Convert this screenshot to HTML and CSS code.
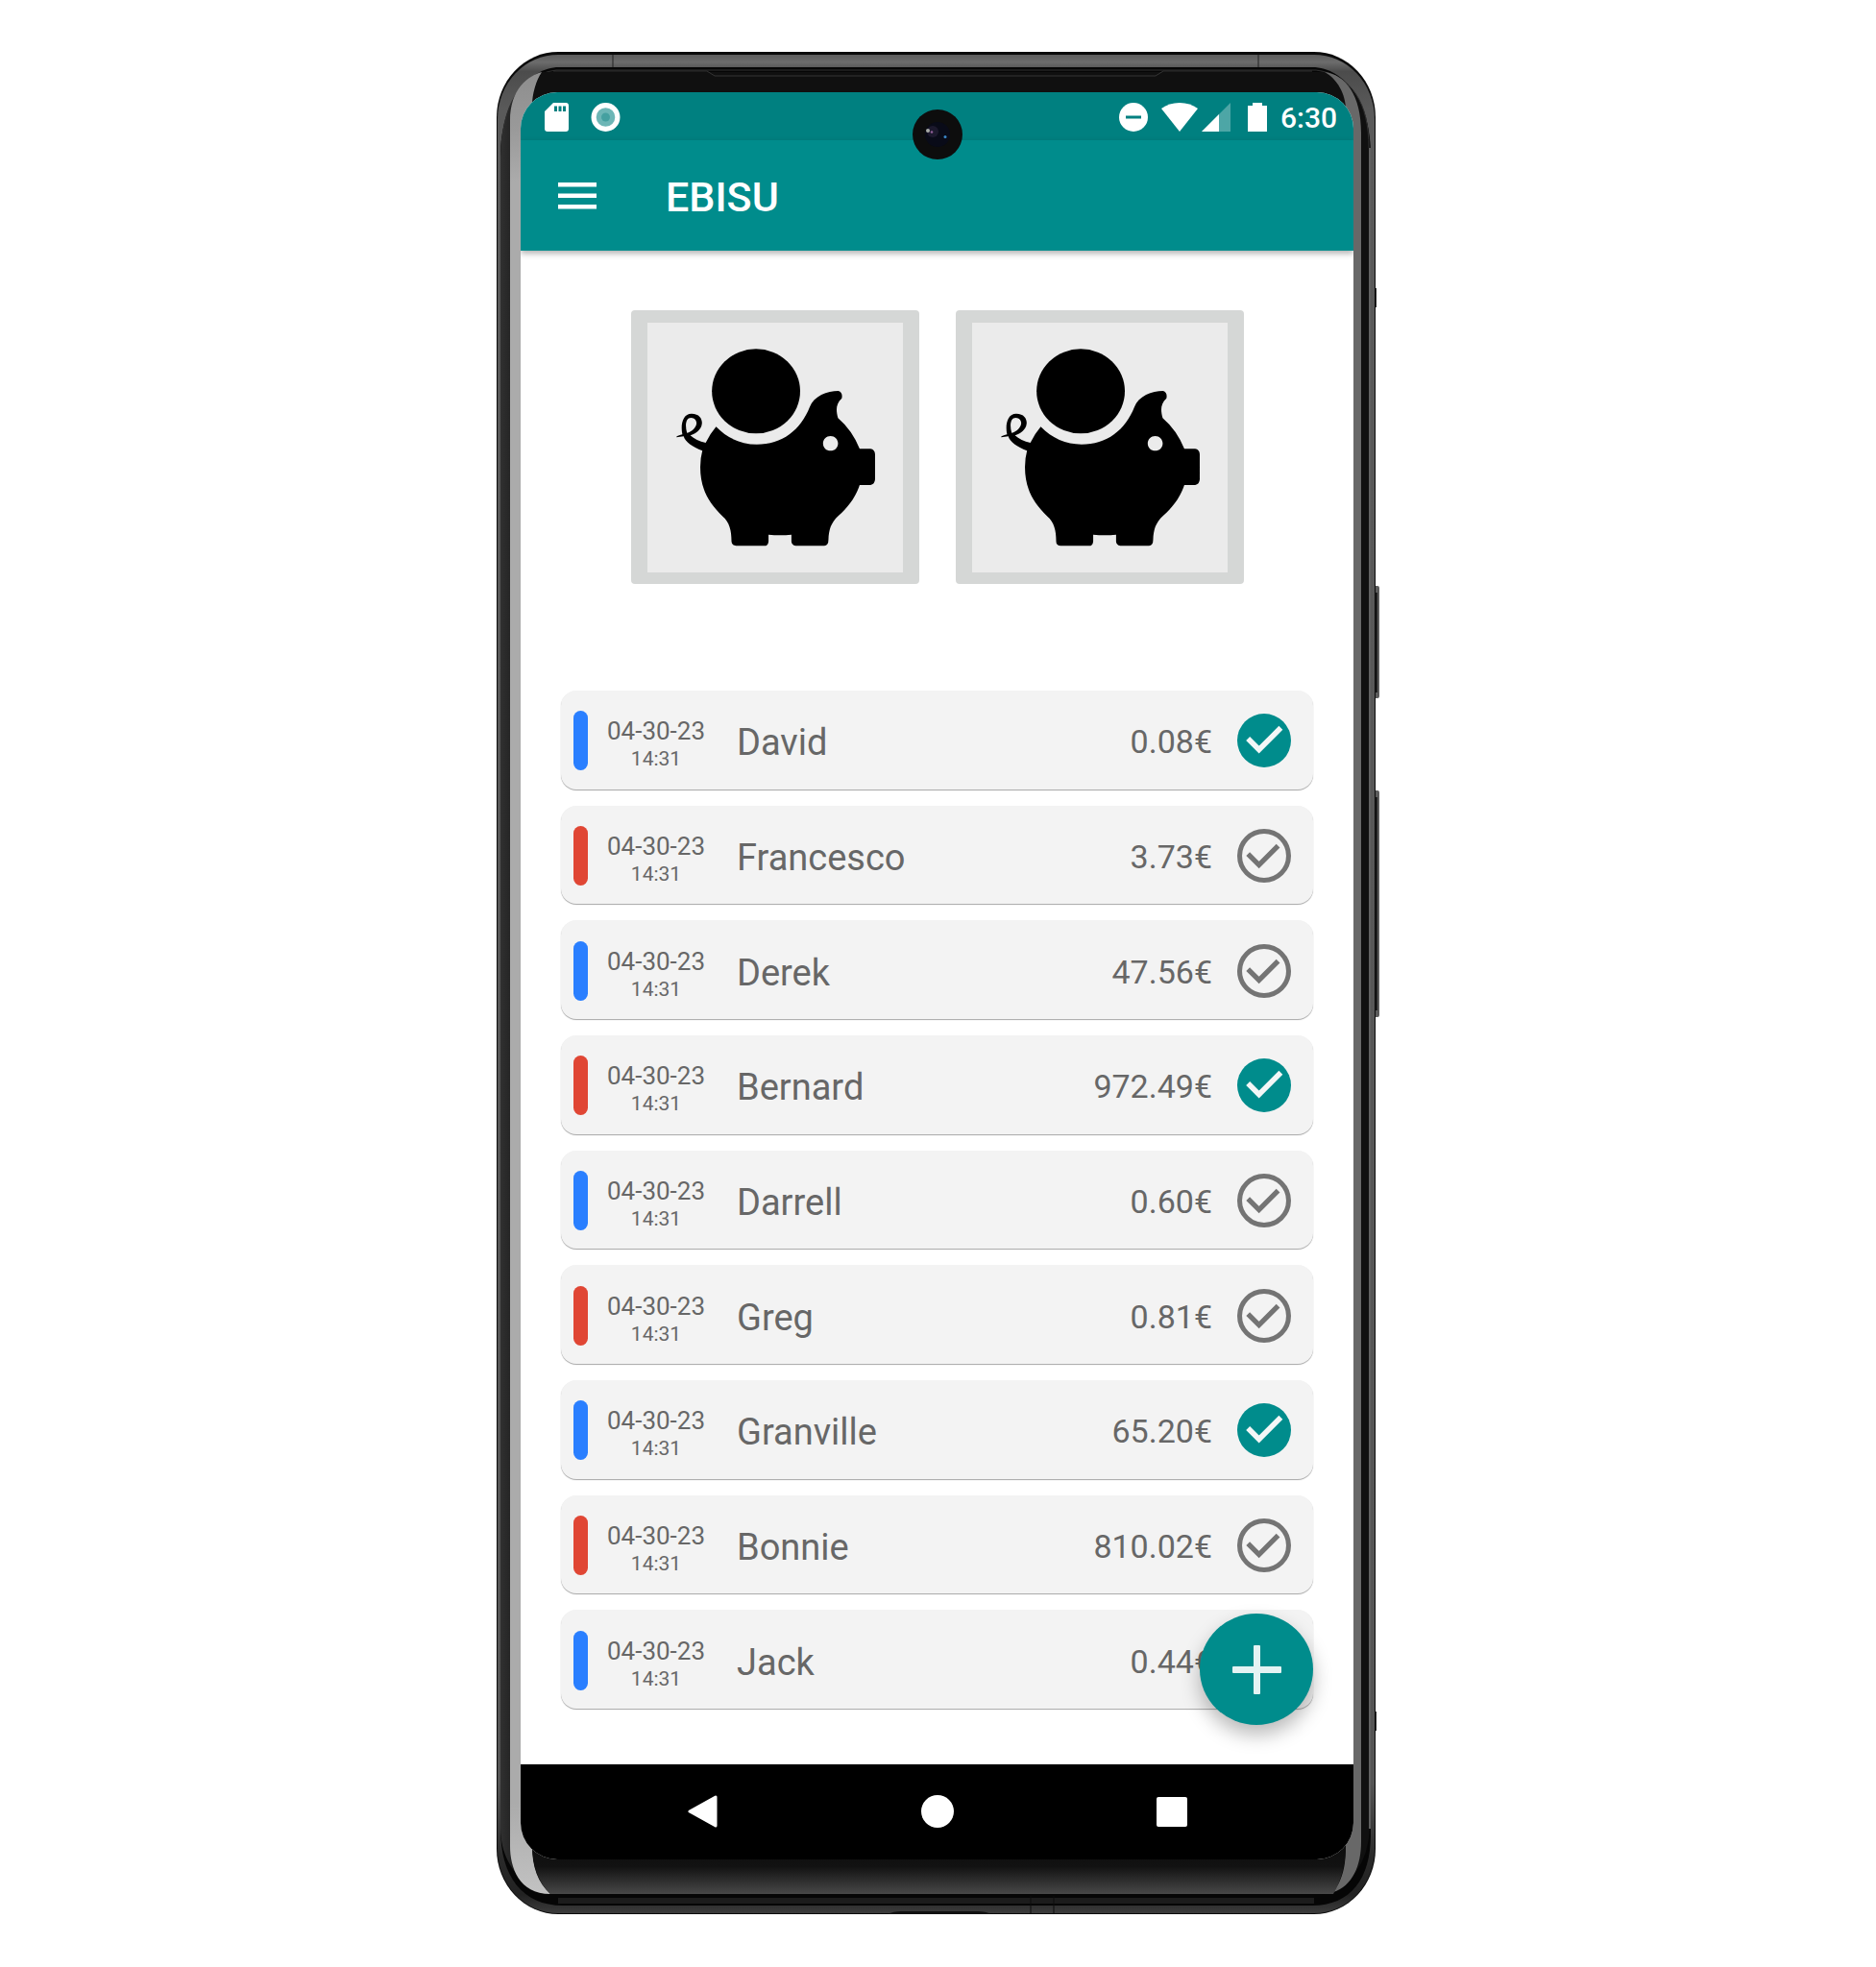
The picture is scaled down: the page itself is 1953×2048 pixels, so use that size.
FILE: index.html
```html
<!DOCTYPE html>
<html lang="en">
<head>
<meta charset="utf-8">
<meta name="viewport" content="width=device-width, initial-scale=1">
<title>EBISU</title>
<link rel="stylesheet" href="styles.css">
</head>
<body>
<svg class="sprites" aria-hidden="true">
  <defs>
    <symbol id="tick-on" viewBox="2 2 20 20"><circle cx="12" cy="12" r="10" fill="#008c8c"/><path d="M6 11.3l4.1 4.1 8.1-8.1" fill="none" stroke="#f3f7f7" stroke-width="2"/></symbol>
    <symbol id="tick-off" viewBox="2 2 20 20"><circle cx="12" cy="12" r="9.1" fill="none" stroke="#747474" stroke-width="1.8"/><path d="M6 11.3l4.1 4.1 7.1-7.1" fill="none" stroke="#747474" stroke-width="1.9"/></symbol>
    <symbol id="pig" viewBox="78 107 614 780" preserveAspectRatio="none">
      <ellipse cx="339" cy="321" rx="106" ry="132"/>
      <path fill-rule="evenodd" d="M243 432C270 468 303 487 341 487C402 487 446 442 468 370C478 336 510 320 537 320Q548 325 545 343C530 361 531 382 536 405Q570 443 588 501H614Q624 503 625 517V597Q624 612 614 614H588C578 653 560 684 537 710C518 733 514 755 513 785Q513 803 503 804H434Q424 800 424 790V769Q397 773 369 769V790Q368 804 359 804H291Q280 803 280 790C280 755 275 730 259 712C225 670 205 625 205 558Q205 530 210 507C186 495 169 480 165 462L148 465Q146 461 162 456C157 425 163 391 184 391C204 391 210 409 209 422C208 440 195 454 181 459C190 470 203 479 218 482Q228 455 243 432ZM173 451C185 447 195 435 196 421C196 411 191 405 183 404C170 404 168 427 173 451ZM518 461C508 461 500 471 500 484C500 497 508 507 518 507C528 507 536 497 536 484C536 471 528 461 518 461Z"/>
    </symbol>
  </defs>
</svg>

<div class="phone">
  <svg class="phone-frame" viewBox="0 0 921 1939" preserveAspectRatio="none" aria-hidden="true">
    <defs>
      <linearGradient id="rim" x1="0" y1="0" x2="0" y2="1">
        <stop offset="0" stop-color="#5c5c5c"/><stop offset=".004" stop-color="#6c6c6c"/><stop offset=".009" stop-color="#4c4c4c"/><stop offset=".03" stop-color="#5a5a5a"/><stop offset=".93" stop-color="#555"/><stop offset=".97" stop-color="#2a2a2a"/><stop offset=".99" stop-color="#222"/><stop offset="1" stop-color="#3c3c3c"/>
      </linearGradient>
      <linearGradient id="chin" x1="0" y1="0" x2="0" y2="1">
        <stop offset="0" stop-color="#0d0d0d"/><stop offset=".45" stop-color="#121212"/><stop offset="1" stop-color="#484848"/>
      </linearGradient>
      <linearGradient id="wall-left"><stop offset="0" stop-color="#303030"/><stop offset=".35" stop-color="#1c1c1c"/><stop offset="1" stop-color="#050505"/></linearGradient>
      <linearGradient id="glass-left" x1="0" y1="0" x2="0" y2="1"><stop offset="0" stop-color="#8e8e8e"/><stop offset=".03" stop-color="#999"/><stop offset=".06" stop-color="#ababab"/><stop offset=".95" stop-color="#ababab"/><stop offset="1" stop-color="#c2c2c2"/></linearGradient>
    </defs>
    <path fill="#242424" d="M914 246h3v20h-3zM914 1728h3v20h-3z"/>
    <rect x="914" y="556" width="6" height="117" rx="2" fill="#5c5c5c"/><path fill="#1c1c1c" d="M915 563h3v104h-3z"/>
    <rect x="914" y="769" width="6" height="236" rx="2" fill="#5c5c5c"/><path fill="#1c1c1c" d="M915 776h3v222h-3z"/>
    <rect x="1" width="915" height="1939" rx="64" ry="68" fill="#0b0b0b"/>
    <rect x="2" y="3" width="913" height="1935" rx="63" ry="67" fill="url(#rim)"/>
    <path d="M66 16H850C884 16 911 54 911 108V1856C911 1902 890 1930 850 1930H70C28 1930 5 1900 5 1850V108C5 54 34 16 66 16Z" fill="#060606"/>
    <path d="M65 1925H852" stroke="#1c1c1c" stroke-width="6"/>
    <path d="M5 110Q6 30 60 19Q17 36 15 90V1860Q17 1906 56 1920Q6 1900 5 1850Z" fill="url(#wall-left)"/>
    <path d="M901 100V1868Q898 1906 860 1919Q907 1904 910 1850V100Q909 30 855 18Q900 40 901 100Z" fill="#101010"/>
    <path d="M910 100V1850" stroke="#606060" stroke-width="2"/>
    <path d="M7 100C7 58 24 24 63 19H854C892 24 909 54 909 100" fill="none" stroke="#303030"/>
    <path d="M48 21H863Q884 32 885 60H38Q38 38 48 21Z" fill="#101010"/>
    <path d="M48 21C34 25 15 38 15 72V1868C15 1890 24 1918 57 1918C44 1906 38 1890 38 1868V56C38 44 42 30 48 21Z" fill="url(#glass-left)"/>
    <path d="M863 21C885 24 901 45 901 84V1864C901 1888 892 1910 872 1916C882 1902 885 1890 885 1866V60C885 44 876 28 863 21Z" fill="#686868"/>
    <path d="M38 1866H885Q885 1896 872 1918H57Q38 1900 38 1866Z" fill="url(#chin)"/>
    <path d="M60 20H220l8 5H687l8-5H850" fill="none" stroke="#353535"/>
    <path d="M122 3V16M794 3V16" stroke="#222" stroke-width="1"/>
    <path d="M557 1920V1938M581 1920V1938" stroke="#0c0c0c"/>
    <path d="M408 1939q6-3 14-3h80q8 0 14 3z" fill="#111"/>
  </svg>

  <div class="screen">
    <div class="status-bar">
      <svg width="25" height="30" viewBox="0 0 25 30" fill="#fff" aria-hidden="true"><path fill-rule="evenodd" d="M9 0H22Q25 0 25 3V27Q25 30 22 30H3Q0 30 0 27V9ZM10 3.500v5.500h3v-5.500zM14.500 3.500v5.500h3v-5.500zM19 3.500v5.500h3v-5.500z"/></svg>
      <svg class="status-record" width="31" height="30" viewBox="0 0 31 30" aria-hidden="true"><circle cx="15.500" cy="15" r="15" fill="#fff"/><circle cx="15.500" cy="15" r="9.800" fill="#6db6b6"/><circle cx="15.500" cy="15" r="4.500" fill="#45a0a0"/></svg>
      <svg class="status-right" width="30" height="30" viewBox="0 0 30 30" aria-hidden="true"><circle cx="15" cy="15" r="15" fill="#fff"/><path fill="#008080" d="M7 13.500h16v3H7z"/></svg>
      <svg class="status-wifi" width="38" height="30" viewBox="0 0 38 30" fill="#fff" aria-hidden="true"><path d="M19 30L0 6Q8 0 19 0T38 6Z"/></svg>
      <svg class="status-signal" width="30" height="30" viewBox="0 0 30 30" aria-hidden="true"><path d="M30 0V30H0Z" fill="#4da6a6"/><path d="M18 12V30H0Z" fill="#fff"/></svg>
      <svg class="status-battery" width="20" height="30" viewBox="0 0 20 30" fill="#fff" aria-hidden="true"><path d="M0 3H5V0H15V3H20V30H0Z"/></svg>
      <time class="clock">6:30</time>
    </div>
    <svg class="camera" viewBox="0 0 52 52" aria-hidden="true">
      <circle cx="26" cy="26" r="26" fill="#0d0d0d"/><circle cx="26" cy="26" r="13" fill="#090b18"/><circle cx="21" cy="23" r="6" fill="#252036" opacity=".7"/>
      <circle cx="16" cy="22" r="2" fill="#a8aca8"/><circle cx="20" cy="23.500" r="1.300" fill="#906098"/><circle cx="34" cy="28.500" r="1.500" fill="#3a86c8"/>
    </svg>
    <header class="app-bar">
      <button class="menu-button" type="button" aria-label="Open menu"><svg width="40" height="28" viewBox="0 0 40 28" fill="#fff" aria-hidden="true"><path d="M0 0h40v4.500H0zM0 11.500h40v4.500H0zM0 23h40v4.500H0z"/></svg></button>
      <h1 class="app-title">EBISU</h1>
    </header>

    <main class="content">
      <div class="banks">
        <button class="bank" type="button" aria-label="First piggy bank"><svg class="bank-pig" aria-hidden="true"><use href="#pig"/></svg></button>
        <button class="bank" type="button" aria-label="Second piggy bank"><svg class="bank-pig" aria-hidden="true"><use href="#pig"/></svg></button>
      </div>

      <ul class="entries">
        <li class="entry"><span class="mark mark-blue"></span><time class="when"><span class="date">04-30-23</span><span class="hour">14:31</span></time><span class="name">David</span><span class="amount">0.08€</span><label class="settled"><input type="checkbox" aria-label="David settled" checked><svg class="on"><use href="#tick-on"/></svg><svg class="off"><use href="#tick-off"/></svg></label></li>
        <li class="entry"><span class="mark mark-red"></span><time class="when"><span class="date">04-30-23</span><span class="hour">14:31</span></time><span class="name">Francesco</span><span class="amount">3.73€</span><label class="settled"><input type="checkbox" aria-label="Francesco settled"><svg class="on"><use href="#tick-on"/></svg><svg class="off"><use href="#tick-off"/></svg></label></li>
        <li class="entry"><span class="mark mark-blue"></span><time class="when"><span class="date">04-30-23</span><span class="hour">14:31</span></time><span class="name">Derek</span><span class="amount">47.56€</span><label class="settled"><input type="checkbox" aria-label="Derek settled"><svg class="on"><use href="#tick-on"/></svg><svg class="off"><use href="#tick-off"/></svg></label></li>
        <li class="entry"><span class="mark mark-red"></span><time class="when"><span class="date">04-30-23</span><span class="hour">14:31</span></time><span class="name">Bernard</span><span class="amount">972.49€</span><label class="settled"><input type="checkbox" aria-label="Bernard settled" checked><svg class="on"><use href="#tick-on"/></svg><svg class="off"><use href="#tick-off"/></svg></label></li>
        <li class="entry"><span class="mark mark-blue"></span><time class="when"><span class="date">04-30-23</span><span class="hour">14:31</span></time><span class="name">Darrell</span><span class="amount">0.60€</span><label class="settled"><input type="checkbox" aria-label="Darrell settled"><svg class="on"><use href="#tick-on"/></svg><svg class="off"><use href="#tick-off"/></svg></label></li>
        <li class="entry"><span class="mark mark-red"></span><time class="when"><span class="date">04-30-23</span><span class="hour">14:31</span></time><span class="name">Greg</span><span class="amount">0.81€</span><label class="settled"><input type="checkbox" aria-label="Greg settled"><svg class="on"><use href="#tick-on"/></svg><svg class="off"><use href="#tick-off"/></svg></label></li>
        <li class="entry"><span class="mark mark-blue"></span><time class="when"><span class="date">04-30-23</span><span class="hour">14:31</span></time><span class="name">Granville</span><span class="amount">65.20€</span><label class="settled"><input type="checkbox" aria-label="Granville settled" checked><svg class="on"><use href="#tick-on"/></svg><svg class="off"><use href="#tick-off"/></svg></label></li>
        <li class="entry"><span class="mark mark-red"></span><time class="when"><span class="date">04-30-23</span><span class="hour">14:31</span></time><span class="name">Bonnie</span><span class="amount">810.02€</span><label class="settled"><input type="checkbox" aria-label="Bonnie settled"><svg class="on"><use href="#tick-on"/></svg><svg class="off"><use href="#tick-off"/></svg></label></li>
        <li class="entry"><span class="mark mark-blue"></span><time class="when"><span class="date">04-30-23</span><span class="hour">14:31</span></time><span class="name">Jack</span><span class="amount">0.44€</span><label class="settled"><input type="checkbox" aria-label="Jack settled"><svg class="on"><use href="#tick-on"/></svg><svg class="off"><use href="#tick-off"/></svg></label></li>
      </ul>
      <button class="add-button" type="button" aria-label="Add entry"><svg width="51" height="51" viewBox="0 0 51 51" fill="#e4f3f3" aria-hidden="true"><rect y="22" width="51" height="7" rx="1"/><rect x="22" width="7" height="51" rx="1"/></svg></button>
    </main>

    <nav class="system-nav" aria-label="System">
      <button type="button" aria-label="Back"><svg width="34" height="34" viewBox="0 0 34 34" aria-hidden="true"><path d="M3 17L30 2V32Z" fill="#fff" stroke="#fff" stroke-width="3" stroke-linejoin="round"/></svg></button>
      <button type="button" aria-label="Home"><svg width="34" height="34" viewBox="0 0 34 34" fill="#fff" aria-hidden="true"><circle cx="17" cy="17" r="17"/></svg></button>
      <button type="button" aria-label="Recent apps"><svg width="34" height="34" viewBox="0 0 34 34" fill="#fff" aria-hidden="true"><rect x="1" y="2" width="32" height="31" rx="2"/></svg></button>
    </nav>
  </div>
</div>
</body>
</html>
```

FILE: styles.css
```css
* {
  box-sizing: border-box;
}

body {
  margin: 0;
  padding: 54px 16px;
  background: #fff;
  color: #676767;
  font-family: Roboto, "Liberation Sans", sans-serif;
}

button {
  display: grid;
  place-items: center;
  margin: 0;
  padding: 0;
  border: 0;
  background: none;
  cursor: pointer;
}

svg {
  display: block;
  flex-shrink: 0;
}

.sprites {
  position: absolute;
  width: 0;
  height: 0;
}

/* Device */
.phone {
  position: relative;
  max-width: 921px;
  margin: 0 auto;
  padding: 42px 28px 57px 26px;
}

.phone-frame {
  position: absolute;
  inset: 0;
  width: 100%;
  height: 100%;
}

.screen {
  position: relative;
  overflow: hidden;
  border-radius: 38px;
  background: #fff;
}

.camera {
  position: absolute;
  z-index: 3;
  top: 18px;
  left: calc(50% - 26px);
  width: 52px;
  height: 52px;
}

/* Status bar */
.status-bar {
  display: flex;
  align-items: center;
  height: 50px;
  padding: 1px 17px 0 25px;
  background: #008080;
  color: #fff;
}

.status-record {
  margin-left: 23px;
}

.status-right {
  margin-left: auto;
}

.status-wifi {
  margin-left: 14px;
}

.status-signal {
  margin-left: 4px;
}

.status-battery {
  margin-left: 18px;
}

.clock {
  margin-left: 14px;
  padding-top: 2px;
  font-size: 30px;
  font-weight: 500;
  line-height: 36px;
}

/* App bar */
.app-bar {
  position: relative;
  z-index: 1;
  display: flex;
  align-items: center;
  height: 115px;
  padding: 0 39px;
  background: #008c8c;
  box-shadow: 0 3px 6px rgba(0, 0, 0, 0.3);
  color: #fff;
}

.app-title {
  margin: 0 0 0 72px;
  padding-top: 3px;
  font-size: 43px;
  font-weight: 500;
  line-height: 48px;
}

/* Content */
.content {
  position: relative;
  padding: 62px 42px 58px;
}

.banks {
  display: flex;
  justify-content: center;
  gap: 38px;
}

.bank {
  width: 300px;
  padding: 13px 17px 12px;
  border-radius: 4px;
  background: #d5d7d6;
}

.bank-pig {
  width: 100%;
  height: 260px;
  background: #ebebeb;
}

.entries {
  display: grid;
  grid-auto-rows: 1fr;
  gap: 17px;
  min-height: 1060px;
  margin: 111px 0 0;
  padding: 0;
  list-style: none;
}

.entry {
  display: flex;
  align-items: center;
  padding: 2px 23px 0 13px;
  border-radius: 16px;
  background: #f3f3f3;
  box-shadow: 0 1px 1px rgba(0, 0, 0, 0.35);
}

.mark {
  width: 15px;
  height: 62px;
  border-radius: 8px;
}

.mark-blue {
  background: #2a7fff;
}

.mark-red {
  background: #e04634;
}

.when {
  display: flex;
  flex-direction: column;
  width: 110px;
  margin-left: 16px;
  padding-top: 8px;
  text-align: center;
}

.date {
  font-size: 26px;
  line-height: 30px;
}

.hour {
  font-size: 21px;
  line-height: 28px;
}

.name {
  flex: 1;
  margin-left: 29px;
  padding-top: 4px;
  font-size: 38px;
  line-height: 44px;
}

.amount {
  padding-top: 2px;
  font-size: 34px;
  line-height: 40px;
}

.settled {
  display: grid;
  width: 56px;
  height: 56px;
  margin-left: 26px;
  cursor: pointer;
}

.settled input,
.settled svg {
  grid-area: 1 / 1;
  width: 56px;
  height: 56px;
  margin: 0;
}

.settled input {
  appearance: none;
}

.settled .on,
.settled input:checked ~ .off {
  display: none;
}

.settled input:checked ~ .on {
  display: block;
}

.add-button {
  position: absolute;
  right: 42px;
  bottom: 41px;
  width: 118px;
  height: 116px;
  border-radius: 50%;
  background: #008c8c;
  box-shadow: 0 10px 20px rgba(0, 0, 0, 0.28);
}

/* System navigation */
.system-nav {
  position: relative;
  display: flex;
  justify-content: center;
  gap: 196px;
  height: 99px;
  padding-bottom: 2px;
  background: #000;
}

.system-nav button {
  width: 48px;
}
```
